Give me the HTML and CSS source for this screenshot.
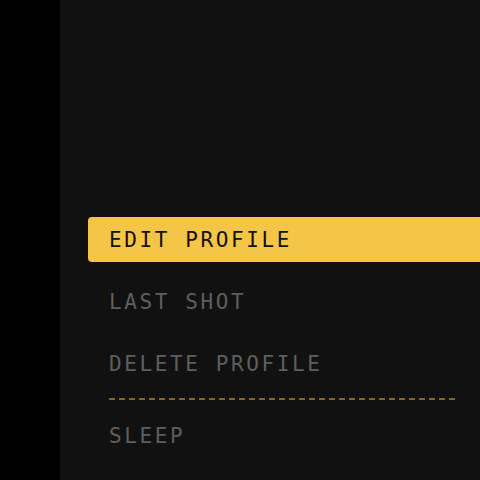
FILE: index.html
```html
<!DOCTYPE html>
<html lang="en">
<head>
    <meta charset="UTF-8">
    <meta name="viewport" content="width=device-width, initial-scale=1.0">
    <title>Profile Menu</title>
    <link rel="stylesheet" href="styles.css">
</head>
<body>
    <div class="screen">
        <aside class="side-rail"></aside>
        <main class="menu-panel">
            <ul class="menu-list">
                <li class="menu-item active">EDIT PROFILE</li>
                <li class="menu-item">LAST SHOT</li>
                <li class="menu-item">DELETE PROFILE</li>
                <li class="menu-divider"></li>
                <li class="menu-item">SLEEP</li>
            </ul>
        </main>
    </div>
</body>
</html>
```

FILE: styles.css
```css
body {
    margin: 0;
    padding: 0;
    background: #000;
    font-family: 'DejaVu Sans Mono', 'Liberation Mono', monospace;
}
.screen {
    display: flex;
    width: 480px;
    height: 480px;
    overflow: hidden;
}
.side-rail {
    width: 60px;
    background: #000;
}
.menu-panel {
    flex: 1;
    background: #111111;
}
.menu-list {
    list-style: none;
    margin: 0;
    padding: 217px 0 0 28px;
}
.menu-item {
    height: 45px;
    line-height: 47px;
    padding-left: 21px;
    margin-bottom: 17px;
    font-size: 21px;
    letter-spacing: 2.6px;
    color: #5e5e5e;
    border-radius: 4px 0 0 4px;
    overflow: hidden;
}
.menu-item.active {
    background: #f5c547;
    color: #111;
}
.menu-divider {
    height: 2px;
    margin: -5px 21px 13px 21px;
    background: repeating-linear-gradient(to right, #86691f 0 6px, transparent 6px 10px);
}
```
